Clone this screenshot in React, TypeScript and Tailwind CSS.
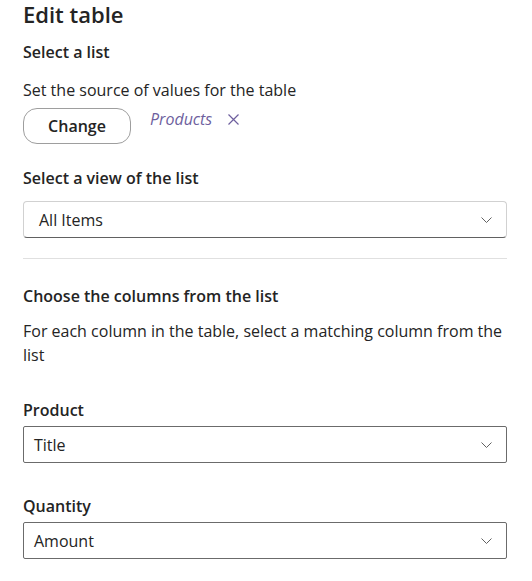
import React from 'react';

function Chevron() {
  return (
    <svg width="11" height="6" viewBox="0 0 11 6" fill="none" className="shrink-0">
      <path d="M0.5 0.5L5.5 5.5L10.5 0.5" stroke="#616161" strokeWidth="1" />
    </svg>
  );
}

function Dismiss() {
  return (
    <svg width="11" height="11" viewBox="0 0 11 11" fill="none">
      <path d="M0.5 0.5L10.5 10.5M10.5 0.5L0.5 10.5" stroke="#6e5f9e" strokeWidth="1.2" />
    </svg>
  );
}

function Dropdown({ value, variant }: { value: string; variant: 'soft' | 'plain' }) {
  const box =
    variant === 'soft'
      ? 'rounded-[4px] border border-[#d1d1d1] border-b-[#616161] pl-[15px]'
      : 'rounded-[2px] border border-[#6b6b6b] pl-[10px]';
  return (
    <div className={`flex h-[37px] items-center justify-between pr-[14px] ${box}`}>
      <span className="text-[16px] leading-[24px]">{value}</span>
      <Chevron />
    </div>
  );
}

export default function App() {
  return (
    <div
      className="w-[532px] h-[581px] bg-white pl-[23px] pr-[25px] text-[#242424] overflow-hidden"
      style={{ fontFamily: '"Open Sans", "Noto Sans", sans-serif' }}
    >
      <h1 className="text-[22px] leading-[28px] font-semibold">Edit table</h1>

      <h2 className="mt-[12px] text-[16px] leading-[24px] font-semibold">Select a list</h2>
      <p className="mt-[14px] text-[16px] leading-[24px]">Set the source of values for the table</p>

      <div className="mt-[6px] flex items-start">
        <button className="h-[36px] w-[108px] rounded-[14px] border border-[#9e9e9e] text-[16px] font-semibold">
          Change
        </button>
        <div className="ml-[19px] -mt-[1px] flex items-center gap-[16px] text-[#6e5f9e]">
          <span className="text-[16px] leading-[24px] italic">Products</span>
          <Dismiss />
        </div>
      </div>

      <h2 className="mt-[22px] text-[16px] leading-[24px] font-semibold">Select a view of the list</h2>
      <div className="mt-[11px]">
        <Dropdown value="All Items" variant="soft" />
      </div>

      <hr className="mt-[20px] border-0 border-t border-[#e0e0e0]" />

      <h2 className="mt-[25px] text-[16px] leading-[24px] font-semibold">Choose the columns from the list</h2>
      <p className="mt-[11px] text-[16px] leading-[24px]">
        For each column in the table, select a matching column from the list
      </p>

      <h3 className="mt-[31px] text-[16px] leading-[24px] font-semibold">Product</h3>
      <div className="mt-[4px]">
        <Dropdown value="Title" variant="plain" />
      </div>

      <h3 className="mt-[31px] text-[16px] leading-[24px] font-semibold">Quantity</h3>
      <div className="mt-[4px]">
        <Dropdown value="Amount" variant="plain" />
      </div>
    </div>
  );
}
